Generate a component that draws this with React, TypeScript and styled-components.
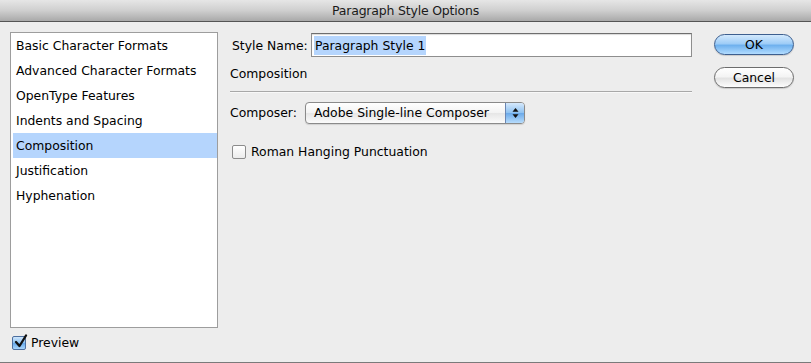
import React from "react";
import styled, { createGlobalStyle } from "styled-components";

const Global = createGlobalStyle`
  html, body { margin: 0; padding: 0; background: #ededed; }
  body { font-family: "DejaVu Sans", "Liberation Sans", sans-serif; }
  * { box-sizing: border-box; }
`;

const Window = styled.div`
  width: 811px;
  height: 363px;
  background: #ededed;
  display: flex;
  flex-direction: column;
  overflow: hidden;
  color: #000;
  font-size: 12.4px;
`;

const TitleBar = styled.div`
  height: 22px;
  flex: none;
  background: linear-gradient(#e6e6e6, #cfcfcf 50%, #a9a9a9);
  border-bottom: 1px solid #555;
  display: flex;
  align-items: center;
  justify-content: center;
  font-size: 12.5px;
  color: #1a1a1a;
  letter-spacing: -0.2px;
`;

const Body = styled.div`
  flex: 1;
  display: flex;
  padding: 10px 0 0 10px;
`;

const LeftCol = styled.div`
  width: 208px;
  display: flex;
  flex-direction: column;
`;

const List = styled.div`
  height: 296px;
  background: #fff;
  border: 1px solid #9d9d9d;
  padding: 0 0 0 2px;
  display: flex;
  flex-direction: column;
`;

const ListItem = styled.div<{ $selected?: boolean }>`
  height: 25px;
  line-height: 25px;
  padding-left: 3px;
  white-space: nowrap;
  background: ${(p) => (p.$selected ? "#b5d5fd" : "transparent")};
`;

const CheckRow = styled.label`
  display: flex;
  align-items: center;
  gap: 5px;
  white-space: nowrap;
`;

const PreviewRow = styled(CheckRow)`
  margin-top: 7px;
  padding-left: 2px;
`;

const Main = styled.div`
  width: 462px;
  margin-left: 12px;
  display: flex;
  flex-direction: column;
`;

const NameRow = styled.div`
  display: flex;
  align-items: center;
  height: 24px;
  margin-top: 1px;
  padding-left: 2px;
`;

const Label = styled.span`
  white-space: nowrap;
`;

const NameInput = styled.div`
  margin-left: auto;
  width: 381px;
  height: 24px;
  border: 1px solid #8e8e8e;
  border-top-color: #6e6e6e;
  background: #fff;
  box-shadow: inset 0 1px 1px rgba(0,0,0,0.15);
  display: flex;
  align-items: center;
  padding-left: 2px;
`;

const Selection = styled.span`
  background: #b5d5fd;
  padding: 1px 1px;
  line-height: 17px;
`;

const Heading = styled.div`
  margin-top: 9px;
  height: 15px;
  line-height: 15px;
`;

const Separator = styled.div`
  margin-top: 10px;
  height: 1px;
  background: #a8a8a8;
  border-bottom: 1px solid #f8f8f8;
  box-sizing: content-box;
`;

const ComposerRow = styled.div`
  margin-top: 8px;
  display: flex;
  align-items: center;
  height: 23px;
`;

const Popup = styled.div`
  margin-left: auto;
  margin-right: 167px;
  width: 220px;
  height: 22px;
  border: 1px solid #8a8a8a;
  border-radius: 4px;
  background: linear-gradient(#ffffff, #f3f3f3 50%, #e6e6e6 51%, #fbfbfb);
  display: flex;
  align-items: center;
  overflow: hidden;
  box-shadow: 0 1px 1px rgba(0,0,0,0.12);
`;

const PopupText = styled.span`
  flex: 1;
  padding-left: 8px;
  white-space: nowrap;
`;

const Stepper = styled.div`
  width: 19px;
  height: 100%;
  border-left: 1px solid #6a86b3;
  background: linear-gradient(#d6e9fc, #8dc1f1 50%, #6aa9e9 51%, #b7dcfc);
  display: flex;
  align-items: center;
  justify-content: center;
`;

const HangRow = styled(CheckRow)`
  margin-top: 20px;
  padding-left: 2px;
`;

const Buttons = styled.div`
  margin-left: 22px;
  width: 80px;
  display: flex;
  flex-direction: column;
  gap: 12px;
  padding-top: 2px;
`;

const Button = styled.div<{ $default?: boolean }>`
  height: 21px;
  border-radius: 11px;
  border: 1px solid ${(p) => (p.$default ? "#3d5f8f" : "#6d6d6d")};
  background: ${(p) =>
    p.$default
      ? "linear-gradient(#d3e9fd, #9fcdf7 45%, #6fb1ee 55%, #b2dcff)"
      : "linear-gradient(#ffffff, #f4f4f4 45%, #e3e3e3 55%, #fdfdfd)"};
  display: flex;
  align-items: center;
  justify-content: center;
  box-shadow: 0 1px 1px rgba(0,0,0,0.15);
  color: #000;
`;

const Box = styled.span<{ $checked?: boolean }>`
  width: 14px;
  height: 14px;
  border-radius: 2px;
  border: 1px solid ${(p) => (p.$checked ? "#4d6f9f" : "#8c8c8c")};
  background: ${(p) =>
    p.$checked
      ? "linear-gradient(#cfe6fc, #8cc2f2 50%, #65a8ea 51%, #a9d6fc)"
      : "linear-gradient(#ffffff, #ececec)"};
  display: inline-flex;
  align-items: flex-end;
  justify-content: center;
  position: relative;
  flex: none;
`;

const BottomLine = styled.div`
  height: 1px;
  background: #7a7a7a;
  flex: none;
`;

const Check = () => (
  <svg width="14" height="15" viewBox="0 0 14 15" style={{ position: "absolute", left: 1, top: -3 }}>
    <path d="M2 8 L5.5 12 L12 1.5" fill="none" stroke="#111" strokeWidth="2.3" strokeLinecap="round" strokeLinejoin="round" />
  </svg>
);

const Arrows = () => (
  <svg width="7" height="12" viewBox="0 0 7 12">
    <path d="M3.5 1 L6.5 4.8 L0.5 4.8 Z" fill="#111" />
    <path d="M3.5 11 L6.5 7.2 L0.5 7.2 Z" fill="#111" />
  </svg>
);

const items = [
  "Basic Character Formats",
  "Advanced Character Formats",
  "OpenType Features",
  "Indents and Spacing",
  "Composition",
  "Justification",
  "Hyphenation",
];

export default function App() {
  return (
    <Window>
      <Global />
      <TitleBar>Paragraph Style Options</TitleBar>
      <Body>
        <LeftCol>
          <List>
            {items.map((it) => (
              <ListItem key={it} $selected={it === "Composition"}>
                {it}
              </ListItem>
            ))}
          </List>
          <PreviewRow>
            <Box $checked>
              <Check />
            </Box>
            Preview
          </PreviewRow>
        </LeftCol>
        <Main>
          <NameRow>
            <Label>Style Name:</Label>
            <NameInput>
              <Selection>Paragraph Style 1</Selection>
            </NameInput>
          </NameRow>
          <Heading>Composition</Heading>
          <Separator />
          <ComposerRow>
            <Label>Composer:</Label>
            <Popup>
              <PopupText>Adobe Single-line Composer</PopupText>
              <Stepper>
                <Arrows />
              </Stepper>
            </Popup>
          </ComposerRow>
          <HangRow>
            <Box />
            Roman Hanging Punctuation
          </HangRow>
        </Main>
        <Buttons>
          <Button $default>OK</Button>
          <Button>Cancel</Button>
        </Buttons>
      </Body>
      <BottomLine />
    </Window>
  );
}
